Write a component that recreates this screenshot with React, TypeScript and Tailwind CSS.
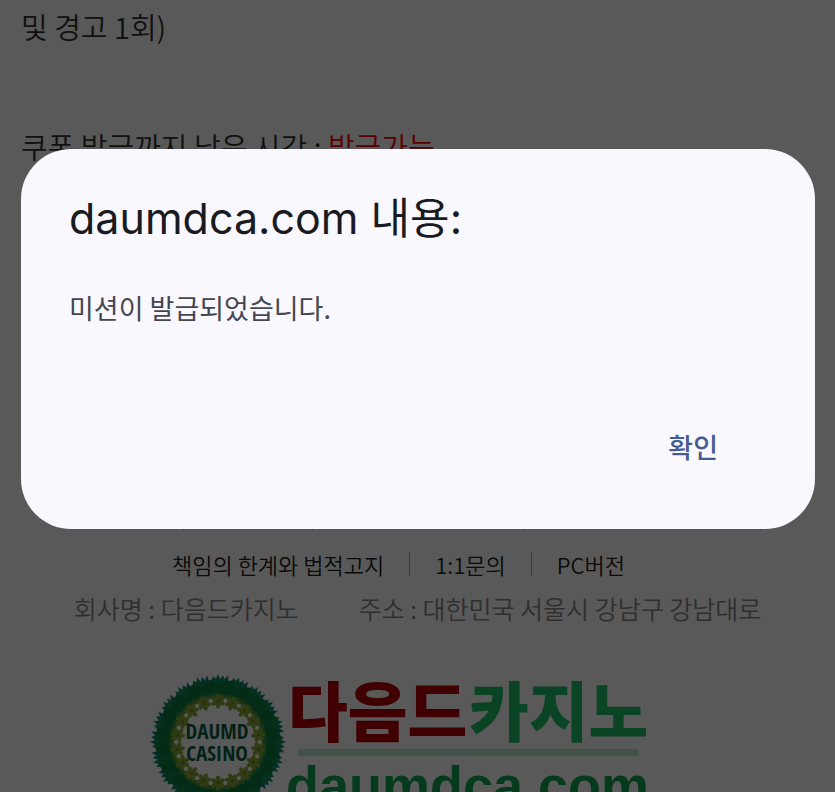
import { useState } from "react";

const outerSteps = Array.from({ length: 20 }, (_, index) => index * 18);
const innerSteps = Array.from({ length: 20 }, (_, index) => index * 18 + 9);
const flowerSteps = Array.from({ length: 18 }, (_, index) => index * 20);
const petalSteps = [0, 60, 120, 180, 240, 300];

const LEAF = "M0 10 L-3 4 L-9 5 L-7 0 L-10 -4 L-5 -4 L-4 -9 L-1 -6 L1 -11 L3 -6 L7 -8 L6 -3 L10 -2 L7 2 L8 6 L3 4Z";

function Wreath() {
  return (
    <g transform="translate(68 89)">
      <circle r="52" fill="none" stroke="#178a4a" strokeWidth="14" />
      {outerSteps.map((angle) => (
        <g key={angle} transform={`rotate(${angle})`}>
          <path d={LEAF} transform="translate(5 -57) rotate(24)" fill="#17899c" />
          <path d={LEAF} transform="translate(-1 -57)" fill="#0f8a58" />
        </g>
      ))}
      {innerSteps.map((angle) => (
        <g key={angle} transform={`rotate(${angle})`}>
          <path d={LEAF} transform="translate(0 -54) rotate(-14)" fill="#0c7c3c" />
        </g>
      ))}
      <circle r="46" fill="none" stroke="#4c9438" strokeWidth="4" />
      {flowerSteps.map((angle) => (
        <g key={angle} transform={`rotate(${angle}) translate(0 -41)`} fill="#8aa538">
          {petalSteps.map((petal) => (
            <ellipse key={petal} cx="0" cy="-4" rx="2.2" ry="3.4" transform={`rotate(${petal})`} />
          ))}
          <circle r="1.4" fill="#5d8a30" />
        </g>
      ))}
    </g>
  );
}

function Logo() {
  return (
    <svg viewBox="0 0 504 164" className="h-[164px] w-[504px] shrink-0" role="img" aria-label="다음드카지노">
      <Wreath />
      <g fontFamily="'Open Sans Condensed', 'Liberation Sans', sans-serif" fontSize="21" textAnchor="middle" fill="#0b5f40">
        <text x="67" y="86" fontWeight="300">DAUMD</text>
        <text x="67" y="108" fontWeight="700">CASINO</text>
      </g>
      <g fontFamily="'Noto Sans CJK KR', sans-serif" fontSize="65" fontWeight="900">
        <text x="138" y="83" fill="#b80008">다음드</text>
        <text x="319" y="83" fill="#1fc267">카지노</text>
      </g>
      <rect x="148" y="96" width="341" height="7" rx="3" fill="#bcecd1" />
      <text x="136" y="151" fontFamily="'Liberation Sans', sans-serif" fontSize="54" fontWeight="700" fill="#12a651">
        daumdca.com
      </text>
    </svg>
  );
}

function Divider() {
  return <span className="h-6 w-px bg-neutral-400" />;
}

export default function App() {
  const [open, setOpen] = useState(true);

  return (
    <div className="relative h-screen overflow-hidden bg-white font-['Noto_Sans_CJK_KR',sans-serif] text-[#333]">
      <main className="px-[21px] pt-[5px] text-[29px] leading-[42px] font-[350]">
        <p>및 경고 1회)</p>
        <p className="mt-[78px]">
          쿠폰 발급까지 남은 시간 : <span className="text-[#f00]">발급가능</span>
        </p>
      </main>

      <footer className="mt-[339px] flex flex-col items-center">
        <div className="grid w-full grid-cols-[22%_15.5%_25.3%_28.5%]">
          {[0, 1, 2, 3].map((column) => (
            <div key={column} className="flex justify-end">
              <Divider />
            </div>
          ))}
        </div>
        <nav className="mt-4 flex items-center gap-[25px] pr-[38px] text-[22px] leading-9 font-[350] text-[#222]">
          <a href="#legal">책임의 한계와 법적고지</a>
          <Divider />
          <a href="#contact">1:1문의</a>
          <Divider />
          <a href="#pc">PC버전</a>
        </nav>
        <address className="mt-2 flex gap-[60px] text-[25px] leading-9 font-[350] text-[#888] not-italic">
          <span>회사명 : 다음드카지노</span>
          <span>주소 : 대한민국 서울시 강남구 강남대로</span>
        </address>
        <div className="mt-[27px] pr-8">
          <Logo />
        </div>
      </footer>

      {open ? (
        <div className="absolute inset-0 bg-black/65 pr-5 pl-[21px] pt-[149px]">
          <div
            role="alertdialog"
            aria-modal="true"
            aria-labelledby="alert-title"
            aria-describedby="alert-message"
            className="rounded-[50px] bg-[#f9f8ff] px-12 pt-[39px] pb-12"
          >
            <h1 id="alert-title" className="font-['Inter','Noto_Sans_CJK_KR',sans-serif] text-[43px] leading-[60px] text-[#1a1b21]">
              daumdca.com 내용:
            </h1>
            <p id="alert-message" className="mt-10 text-[27px] leading-10 text-[#45464f]">
              미션이 발급되었습니다.
            </p>
            <div className="mt-[85px] flex justify-end pr-[25px]">
              <button
                type="button"
                onClick={() => setOpen(false)}
                className="px-6 py-3 text-[27px] leading-[44px] font-medium text-[#475b92]"
              >
                확인
              </button>
            </div>
          </div>
        </div>
      ) : null}
    </div>
  );
}
